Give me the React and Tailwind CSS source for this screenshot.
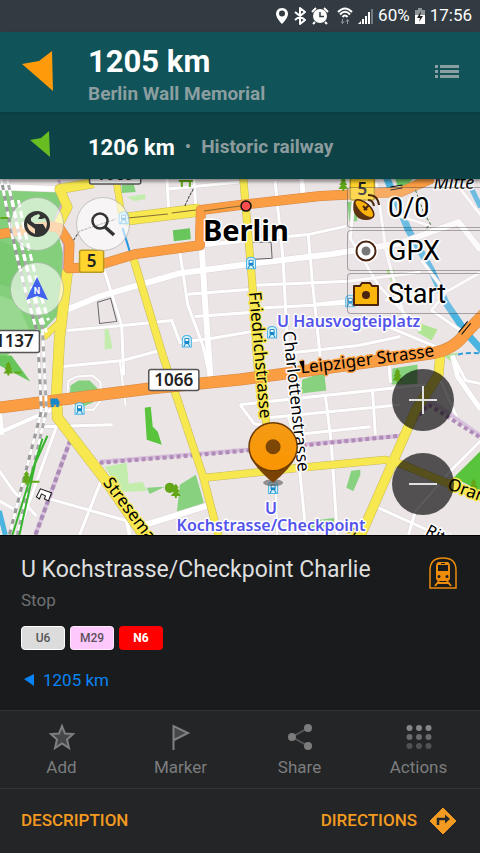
import React from "react";

const MINOR_ROADS = [
  ["M0 187 L60 189", 6],
  ["M68 309 L100 296 L180 273 L240 265 L330 254 L400 243 L430 232 L458 222 L480 250", 6],
  ["M167 175 L169 212", 3], ["M169 189 L240 182", 3], ["M194 175 L196 210", 3],
  ["M202 250 L205 300 L211 382", 6], ["M203 245 L240 241", 4],
  ["M180 252 L188 305 L203 345 L211 382", 3],
  ["M104 268 L122 325 L124 375", 3],
  ["M68 330 L123 325 L172 320 L180 342 L211 338 L252 331", 3],
  ["M188 294 L251 289", 3], ["M195 316 L252 312", 3],
  ["M63 366 L123 360 L160 350", 3],
  ["M120 360 L126 405", 2],
  ["M275 181 L283 260 L288 358", 3], ["M301 175 L303 194", 5],
  ["M308 234 L312 280 L320 356", 3],
  ["M253 240 L310 234 L346 226", 3], ["M255 285 L348 281 L420 272", 3],
  ["M314 304 L350 300", 3], ["M256 308 L350 303", 3],
  ["M285 353 L358 345 L400 336", 3],
  ["M355 180 L350 238 L378 285 L420 330", 3],
  ["M376 183 L386 253 L405 320", 3],
  ["M421 260 L445 292 L480 272", 3], ["M445 292 L431 310 L460 330", 3],
  ["M385 300 L430 290 M455 183 L480 215 M397 215 L430 226", 3],
  ["M370 319 L444 350", 3],
  ["M0 432 L50 410 L64 404", 4], ["M3 434 L0 405", 4],
  ["M41 426 L113 424", 3], ["M70 440 L37 534", 3], ["M58 423 L18 534", 3],
  ["M103 476 L80 534", 3], ["M50 498 L128 520", 3], ["M0 470 L14 490 L37 515", 3],
  ["M0 500 L14 508", 3], ["M145 524 L207 505", 6],
  ["M127 520 L130 534", 4], ["M98 461 L205 454 L266 445", 3],
  ["M240 404 L435 383", 3], ["M268 417 L400 404", 3],
  ["M266 437 L370 426", 3], ["M240 404 L254 423 L266 425", 3],
  ["M325 394 L331 442 L337 534", 3], ["M372 388 L375 434", 3],
  ["M288 415 L297 445 L306 534", 3], ["M276 492 L277 534", 2],
  ["M388 355 L390 382", 3],
  ["M452 355 L465 380 L480 383", 3],
  ["M440 380 L460 425", 3], ["M480 440 L450 470 L415 510 L408 534", 3],
  ["M376 506 L438 534", 3], ["M452 355 L457 376 L480 409", 5],
  ["M68 391 L69 380 L77 376 L93 375 L101 382 L101 400 L94 409 L76 409 Z", 2],
];

const YELLOW_ROADS = [
  ["M94 183 L60 189 L68 207 L58 226", 9],
  ["M116 177 L122 214", 6],
  ["M44 337 L60 322", 6],
  ["M126 219 L200 210", 12],
  ["M68 270 L60 338 L57 395 L58 417 L108 482 L148 540", 10],
  ["M133 256 L163 355 L178 400 L203 475 L220 540", 7],
  ["M243 175 L252 280 L258 370 L269 440", 7],
  ["M205 477 L300 467 L385 459 L400 463 L480 496", 7],
  ["M440 350 L438 374 L415 410 L393 460 L358 540", 9],
];

const ORANGE_ROADS = [
  ["M0 234 L50 226 L60 228 L70 243 L69 268 L92 267 L135 254 L200 245 L201 210 L240 205 L320 196 L400 192 L444 173", 9],
  ["M0 407 L150 388 L240 379 L330 367 L430 353 Q452 350 464 334 L484 313", 11],
];

function Roads({ items, fill, edge }) {
  return (
    <>
      {items.map(([d, w]) => <path key={"e" + d} d={d} fill="none" stroke={edge} strokeWidth={w + 1} strokeLinejoin="round" />)}
      {items.map(([d, w]) => <path key={d} d={d} fill="none" stroke={fill} strokeWidth={w} strokeLinejoin="round" />)}
    </>
  );
}

function Halo({ children, halo = "#fff", color = "#000", w = 3, ...rest }) {
  return (
    <text fill={color} stroke={halo} strokeWidth={w} strokeLinejoin="round" paintOrder="stroke" {...rest}>
      {children}
    </text>
  );
}

function StopMark({ x, y }) {
  return (
    <g transform={`translate(${x} ${y})`}>
      <path d="M-4.500 5.500 V-2 Q-4.500 -6 0 -6 Q4.500 -6 4.500 -2 V5.500 Z" fill="#d9f1fb" stroke="#49b4e6" />
      <rect x="-2.500" y="-3.500" width="5" height="6" rx="1" fill="#1588c9" />
      <rect x="-1.500" y="-2.500" width="3" height="2" fill="#fff" />
      <path d="M-1.500 2.500 L-3 5 M1.500 2.500 L3 5" stroke="#1588c9" />
    </g>
  );
}

function Tree({ x, y }) {
  return <path transform={`translate(${x} ${y})`} d="M0 -7 L3 -3 H1.500 L4 1 H2 L5 5 H1 V7 H-1 V5 H-5 L-2 1 H-4 L-1.500 -3 H-3 Z" fill="#63a719" />;
}

function Shield({ x, y, w, h, label, bg = "#fff", border = "#555", tx }) {
  return (
    <g>
      <rect x={x} y={y} width={w} height={h} rx="2" fill={bg} stroke={border} strokeWidth="1.500" />
      <text x={tx ?? x + w / 2} y={y + h / 2 + 6} textAnchor="middle" fontSize="17" fontWeight="600" fill="#222">{label}</text>
    </g>
  );
}

function CityMap() {
  return (
    <svg className="absolute inset-0 h-full w-full font-['Noto_Sans',sans-serif]" viewBox="0 179 480 355" preserveAspectRatio="xMidYMid slice" role="img" aria-label="Map of Berlin">
      <defs>
        <linearGradient id="pin" x1="0" y1="0" x2="0" y2="1">
          <stop offset="0" stopColor="#f49b16" />
          <stop offset="1" stopColor="#fb9500" />
        </linearGradient>
        <linearGradient id="shade" x1="0" y1="0" x2="0" y2="1">
          <stop offset="0" stopColor="#000" stopOpacity=".35" />
          <stop offset="1" stopColor="#000" stopOpacity="0" />
        </linearGradient>
      </defs>
      <rect y="170" width="480" height="370" fill="#ece5e6" />

      {/* parks */}
      <path d="M0 190 H61 L64 215 L56 222 L64 255 L61 312 L42 332 L0 360 Z" fill="#84cf7c" />
      <path d="M0 295 L18 302 L30 330 L0 352 Z" fill="#99d890" />
      <path d="M0 240 L28 252 L20 290 L0 284 Z" fill="#79c970" />
      <path d="M0 355 H12 L31 381 L0 365 Z M173 230 L190 228 L191 239 L174 241 Z" fill="#69c65d" />
      <path d="M122 185 L134 184 L136 192 L122 193 Z M71 385 L79 380 L90 380 L98 388 L93 402 L80 407 L70 399 Z" fill="#85d07d" />
      <path d="M127 197 L145 194 L146 199 L135 201 Z M105 328 L109 329 L113 348 L105 349 Z M105 466 L127 462 L129 483 L143 481 L147 490 L121 491 Z" fill="#c3edac" />
      <path d="M145 407 L151 406 L153 426 L158 431 L162 444 L147 439 Z M480 450 V490 L453 477 Z" fill="#57c43b" />
      <path d="M147 487 L165 486 L150 493 Z M180 484 L196 474 L204 502 L177 512 Z M302 379 L324 372 L326 390 L301 393 Z M392 368 L417 364 L417 384 L391 384 Z M351 470 L360 469 L360 474 L353 490 L346 487 Z M309 520 L334 517 L334 525 L310 529 Z" fill="#87d17f" />
      <path d="M386 270 L393 268 L396 281 L390 281 Z M420 323 L437 329 L431 340 L417 332 Z M443 355 L457 352 L453 363 Z" fill="#b1e593" />
      <path d="M347 202 L356 201 L357 221 L349 222 Z M395 179 H412 L406 187 L397 186 Z" fill="#6fca65" />

      {/* water */}
      <path d="M385 175 L408 230 L431 270 L445 302 L466 333 L484 353" fill="none" stroke="#4bb3df" strokeWidth="7" />
      <path d="M466 179 L480 207 M0 510 L6 534" fill="none" stroke="#4bb3df" strokeWidth="5" />
      <path d="M123 228 L130 251" stroke="#2497e0" strokeWidth="2" />
      <path d="M450 357 Q460 351 480 353" fill="none" stroke="#2f9ed8" strokeWidth="2" strokeDasharray="5 3" />

      <Roads items={MINOR_ROADS} fill="#fff" edge="#dcd4d7" />

      {/* boundaries */}
      <g fill="none" strokeWidth="4">
        <path d="M100 461 L200 453 L310 443 L400 435 L430 400 L480 435" stroke="#d8c1dc" />
        <path d="M100 462 L200 454 L310 444 L400 435 L428 404 L480 437" stroke="#b18bb8" strokeDasharray="4 3" />
        <path d="M71 439 L36 534" stroke="#d8c1dc" />
        <path d="M71 439 L36 534" stroke="#a98bb5" strokeDasharray="5 3" />
        <path d="M59 180 L66 196 L56 220 L65 245 L62 310" stroke="#cbb0ce" strokeWidth="3" />
      </g>

      <Roads items={YELLOW_ROADS} fill="#f7e850" edge="#c8b957" />
      <Roads items={ORANGE_ROADS} fill="#fb9d42" edge="#d38744" />
      <path d="M128 218 L168 214 M172 213 L196 210 M204 211 L240 206" stroke="#866c32" />

      {/* railway */}
      <g fill="none">
        <path d="M2 179 Q16 260 38 332 L42 410 L10 534" stroke="#999" strokeWidth="3" />
        <path d="M8 179 Q24 260 43 328 L47 410 L18 534" stroke="#aaa" strokeWidth="3" />
        <path d="M2 179 Q16 260 38 332 L42 410 L10 534 M8 179 Q24 260 43 328 L47 410 L18 534" stroke="#fff" strokeWidth="3" strokeDasharray="6 5" />
        <path d="M13 200 Q26 270 47 332 M19 200 Q33 270 49 320" stroke="#fff" strokeWidth="3" strokeDasharray="7 4" />
        <path d="M48 435 L36 462 L20 534 M43 438 L13 534" stroke="#37b52e" strokeWidth="2" />
      </g>
      <path d="M74 240 L80 231 L89 228 L101 224 L116 219 M185 206 L189 197 L194 188" fill="none" stroke="#444" strokeDasharray="3 1" />
      <path d="M98 302 L111 298 L117 321 L100 323 Z M253 242 L271 242 L272 258 L254 259" fill="none" stroke="#666" />
      <path d="M37 496 L41 488 L52 492 L49 500 L45 498 L46 495 L42 493 L40 498 Z" fill="#fff" stroke="#111" />
      <path d="M458 332 L467 321 M461 334 L470 323 M390 187 L402 185 M390 190 L402 188" stroke="#111" />
      <path d="M415 190 L423 212 L430 224 L426 228" fill="none" stroke="#27612a" strokeDasharray="3 2" />

      <Tree x={9} y={368} /><Tree x={27} y={477} /><Tree x={176} y={490} /><Tree x={397} y={375} /><Tree x={473} y={485} /><Tree x={343} y={184} />
      <circle cx="170" cy="487" r="5" fill="#63a719" />
      <path d="M179 181 H193 M182 181 V187 M190 181 V187 M1 218 H9 M15 372 H22 M32 481 H40" stroke="#63a719" strokeWidth="2" />

      <StopMark x={124} y={218} /><StopMark x={187} y={341} /><StopMark x={251} y={263} />
      <StopMark x={350} y={301} /><StopMark x={272} y={332} /><StopMark x={80} y={408} /><StopMark x={273} y={487} />
      <path d="M51 398 H58 L60 401 V404 H51 Z" fill="#1588c9" />
      <circle cx="53" cy="405" r="1.500" fill="#1588c9" /><circle cx="58" cy="405" r="1.500" fill="#1588c9" />

      <Shield x={90} y={164} w={51} h={20} label="1069" />
      <Shield x={80} y={250} w={24} h={22} label="5" bg="#ffd42c" border="#b99b24" />
      <Shield x={350} y={178} w={24} h={22} label="5" bg="#ffd42c" border="#b99b24" />
      <Shield x={-12} y={330} w={52} h={22} label="1137" tx={15} />
      <Shield x={149} y={369} w={50} h={21} label="1066" />

      <circle cx="246" cy="206" r="5" fill="#ff4c4c" stroke="#111" strokeWidth="1.500" />
      <Halo x="203" y="241" fontSize="29" fontWeight="700">Berlin</Halo>
      <Halo x="433" y="189" fontSize="18" fontStyle="italic">Mitte</Halo>
      <Halo x="277" y="327" fontSize="16" fontWeight="600" color="#5353ec">U Hausvogteiplatz</Halo>
      <Halo transform="translate(249 292) rotate(85)" fontSize="17" halo="#f7e850">Friedrichstrasse</Halo>
      <Halo transform="translate(283 331) rotate(84)" fontSize="17">Charlottenstrasse</Halo>
      <path id="leipziger" d="M301 373 Q370 365 446 354" fill="none" />
      <Halo fontSize="17" halo="#fb9d42"><textPath href="#leipziger">Leipziger Strasse</textPath></Halo>
      <path d="M299 361 L304 360 L304 371 Z" />
      <Halo transform="translate(103 482) rotate(53)" fontSize="17" halo="#f7e850">Stresemannstrasse</Halo>
      <Halo transform="translate(446 488) rotate(20)" fontSize="17" halo="#f7e850">Oranienstrasse</Halo>
      <Halo transform="translate(424 533) rotate(27)" fontSize="16">Ritterstrasse</Halo>
      <Halo transform="translate(354 535) rotate(-65)" fontSize="17" halo="#f7e850">s</Halo>
      <Halo textAnchor="middle" fontSize="16" fontWeight="600" color="#5353ec">
        <tspan x="271" y="513">U</tspan>
        <tspan x="271" y="530">Kochstrasse/Checkpoint</tspan>
      </Halo>

      {/* selected place */}
      <ellipse cx="273" cy="482" rx="10" ry="3.500" fill="#555" opacity=".6" />
      <path d="M250 456 Q256 468 273 482 Q290 468 296 456 Z" fill="#7a4304" />
      <circle cx="273" cy="446" r="24" fill="url(#pin)" stroke="#6c3c05" strokeWidth="1.500" />
      <circle cx="273" cy="446" r="7.500" fill="#7c4605" />
      <rect y="179" width="480" height="5" fill="url(#shade)" />
    </svg>
  );
}

const ROUND = "flex size-[54px] items-center justify-center rounded-full border border-black/20 bg-white/60 text-[#333]";
const ZOOM = "flex size-[62px] items-center justify-center rounded-full bg-black/65";
const WIDGET = "flex h-[41px] w-full items-center gap-2 rounded-l border border-r-0 border-black/30 bg-[#eee8e9]/20 pl-1";
const WIDGET_TEXT = "text-[27px] leading-8 text-black [text-shadow:0_0_2px_#fff,1px_1px_1px_#fff,-1px_-1px_1px_#fff,2px_0_1px_#fff,-2px_0_1px_#fff,0_2px_1px_#fff]";

function MapControls() {
  return (
    <div className="absolute inset-0 flex justify-between overflow-hidden">
      <div className="flex flex-col gap-[11px] pl-[10px] pt-[18px]">
        <div className="flex gap-3">
          <button className={ROUND} aria-label="Configure map">
            <svg width="28" height="28" viewBox="0 0 28 28" fill="#333">
              <path fillRule="evenodd" d="M14 1 A13 13 0 1 0 14 27 A13 13 0 1 0 14 1 Z M4 13 L8 16 L12 19 V24 Q4 21 4 13 Z M8 8 Q11 5 16 4 L17 6 L15 9 H19 L22 8 Q24 11 24 14 L23 19 L20 14 H12 L8 11 Z" />
            </svg>
          </button>
          <button className={ROUND} aria-label="Search">
            <svg width="28" height="28" viewBox="0 0 28 28" fill="none" stroke="#333">
              <circle cx="11" cy="11" r="7.500" strokeWidth="2.500" /><path d="M16 17 L25 25" strokeWidth="3.500" />
            </svg>
          </button>
        </div>
        <button className={ROUND} aria-label="Compass">
          <svg width="22" height="24" viewBox="0 0 22 24">
            <path d="M11 0 L22 23 L11 19 L0 23 Z" fill="#4162ed" />
            <text x="11" y="17" textAnchor="middle" fontSize="9" fontWeight="700" fill="#fff">N</text>
          </svg>
        </button>
      </div>
      <div className="flex flex-col justify-between pt-2 pb-5">
        <div className="flex w-[133px] flex-col gap-[2px]">
          <button className={WIDGET}>
            <svg width="28" height="32" viewBox="0 0 28 32" fill="none">
              <ellipse cx="12" cy="17" rx="6" ry="12" transform="rotate(-48 12 17)" fill="#f8b20b" stroke="#4b270e" strokeWidth="1.500" />
              <path d="M3 9 C-2 18 4 29 15 28 C18 28 20 27 21 25 C14 26 5 18 3 9 Z" fill="#5d3311" />
              <path d="M12 18 L17 13 M11 14 L15 18" stroke="#4b270e" strokeWidth="2" />
              <path d="M16 8 Q21 8 22 14 M16 3 Q26 3 27 13" stroke="#4b270e" strokeWidth="2" />
            </svg>
            <span className={WIDGET_TEXT}>0/0</span>
          </button>
          <button className={WIDGET}>
            <svg width="28" height="28" viewBox="0 0 28 28">
              <circle cx="14" cy="14" r="12" fill="#fff" />
              <circle cx="14" cy="14" r="9.500" fill="#fff" stroke="#4b2410" strokeWidth="2" />
              <circle cx="14" cy="14" r="4.500" fill="#777" />
            </svg>
            <span className={WIDGET_TEXT}>GPX</span>
          </button>
          <button className={WIDGET}>
            <svg width="28" height="28" viewBox="0 0 28 28">
              <path d="M2 6 H8 L10 3 H18 L20 6 H26 V25 H2 Z" fill="#f9b50b" stroke="#4b2410" strokeWidth="2" strokeLinejoin="round" />
              <circle cx="14" cy="15" r="4" fill="#4b2410" />
            </svg>
            <span className={WIDGET_TEXT}>Start</span>
          </button>
        </div>
        <div className="flex flex-col items-end gap-[22px] pr-[26px]">
          <button className={ZOOM} aria-label="Zoom in">
            <svg width="28" height="28" stroke="#e0e0e0" strokeWidth="2"><path d="M0 14 H28 M14 0 V28" /></svg>
          </button>
          <button className={ZOOM} aria-label="Zoom out">
            <svg width="28" height="28" stroke="#e0e0e0" strokeWidth="2"><path d="M0 14 H28" /></svg>
          </button>
        </div>
      </div>
    </div>
  );
}

function StatusBar() {
  return (
    <div className="flex h-8 items-center justify-end bg-[#323b41] pr-2 text-[17px] text-white">
      <svg width="14" height="18" viewBox="0 0 14 18" className="mr-1"><path fillRule="evenodd" d="M7 1 C3 1 1 4 1 7 C1 11 7 17 7 17 C7 17 13 11 13 7 C13 4 11 1 7 1 Z M7 3.500 A3 3 0 1 1 7 9.500 A3 3 0 1 1 7 3.500 Z" fill="#fff" /></svg>
      <svg width="14" height="18" viewBox="0 0 14 18" className="mr-1"><path d="M2 5 L12 13 L7 17 V1 L12 5 L2 13" fill="none" stroke="#fff" strokeWidth="2" strokeLinejoin="round" /></svg>
      <svg width="18" height="18" viewBox="0 0 18 18" className="mr-2">
        <circle cx="9" cy="9" r="7" fill="#fff" />
        <path d="M1 5 L5 1 M17 5 L13 1 M4 15 L2 17 M14 15 L16 17" stroke="#fff" strokeWidth="2" />
        <path d="M9 5 V9.500 H13" fill="none" stroke="#323b41" strokeWidth="1.500" />
      </svg>
      <svg width="16" height="18" viewBox="0 0 16 18" fill="none" className="mr-1">
        <path d="M1 5 Q8 -2 15 5 M3 7.500 Q8 2 13 7.500 M5.500 10 Q8 7 10.500 10" stroke="#fff" strokeWidth="2" />
        <path d="M5.500 12 V16 M4 14.500 L5.500 16.500 L7 14.500 M10.500 17 V13 M9 14.500 L10.500 12.500 L12 14.500" stroke="#929a9e" />
      </svg>
      <svg width="17" height="18" viewBox="0 0 17 18" className="mr-1" strokeWidth="2">
        <path d="M1 17 L4 14 V17 Z" fill="#fff" />
        <path d="M6 17 V12 M9 17 V9 M12 17 V5" stroke="#fff" /><path d="M15 17 V2" stroke="#737b80" />
      </svg>
      <span>60%</span>
      <svg width="12" height="18" viewBox="0 0 12 18" className="ml-1 mr-1">
        <path d="M4 1 H8 V3 H11 V8 H1 V3 H4 Z" fill="#8c9396" /><path d="M1 8 H11 V17 H1 Z" fill="#fff" />
        <path d="M7 4 L3 11 H6 L5 15 L9 9 H6 Z" fill="#222" />
      </svg>
      <span>17:56</span>
    </div>
  );
}

const ACTION = "flex flex-1 flex-col items-center gap-1 pt-3 text-[17px] leading-6 text-[#7c7d7e]";

export default function App() {
  return (
    <div className="flex min-h-screen w-full flex-col bg-[#191b1d] font-[Roboto,sans-serif]">
      <StatusBar />
      <header className="relative z-10 bg-[#0d4347] shadow-md">
        <div className="flex h-20 items-center bg-[#105359] pr-5 shadow">
          <div className="w-[88px] pl-[22px]">
            <svg width="32" height="42" viewBox="0 0 32 42"><path d="M0 13 L17 10 L30 0 L31 40 Z" fill="#ff9b0b" /></svg>
          </div>
          <div className="flex-1 pt-2">
            <div className="text-[31px] leading-9 font-bold text-white">1205 km</div>
            <div className="text-[19px] leading-7 font-bold text-[#8c9ea0]">Berlin Wall Memorial</div>
          </div>
          <button aria-label="Waypoint list">
            <svg width="26" height="16" viewBox="0 0 26 16" fill="#899ea0"><path d="M1 1 H4 V4 H1 Z M1 6 H4 V9 H1 Z M1 11 H4 V14 H1 Z M6 1 H25 V4 H6 Z M6 6 H25 V9 H6 Z M6 11 H25 V14 H6 Z" /></svg>
          </button>
        </div>
        <div className="flex h-[67px] items-center pt-1">
          <div className="w-[88px] pb-2 pl-[29px]">
            <svg width="22" height="28" viewBox="0 0 22 28"><path d="M1 10 L12 8 L20 1 L21 27 Z" fill="#68bd22" /></svg>
          </div>
          <span className="text-[22px] font-bold text-white">1206 km</span>
          <span className="mx-[10px] text-[19px] text-[#8c9c9e]">•</span>
          <span className="text-[19px] font-bold text-[#8c9c9e]">Historic railway</span>
        </div>
      </header>

      <main className="relative min-h-[340px] flex-1 overflow-hidden">
        <CityMap />
        <MapControls />
      </main>

      <section className="flex justify-between border-t border-black px-[21px] pt-[18px] pb-[18px]">
        <div>
          <h1 className="text-[23px] leading-8 text-[#dedfdf]">U Kochstrasse/Checkpoint Charlie</h1>
          <p className="mt-[2px] text-[17px] leading-6 text-[#707273]">Stop</p>
          <div className="mt-[14px] flex gap-[5px] text-[12px] font-medium">
            <span className="flex h-6 w-11 items-center justify-center rounded border border-white bg-[#dcdcdc] text-[#555]">U6</span>
            <span className="flex h-6 w-11 items-center justify-center rounded border border-white/60 bg-[#fdc8fb] text-[#5d505d]">M29</span>
            <span className="flex h-6 w-11 items-center justify-center rounded bg-[#ff0000] font-bold text-white">N6</span>
          </div>
          <div className="mt-[18px] flex items-center gap-2 pl-[3px] text-[17px] leading-6 text-[#0b84f3]">
            <svg width="11" height="12" viewBox="0 0 11 12"><path d="M0 5 L10 0 V12 Z" fill="#0b84f3" /></svg>
            1205 km
          </div>
        </div>
        <svg className="mt-[3px]" width="30" height="32" viewBox="0 0 30 32" fill="none">
          <path d="M1 31 V13 C1 5 6 1 14 1 C22 1 27 5 27 13 V31 Z" stroke="#ed8b0b" strokeWidth="1.500" />
          <path fillRule="evenodd" d="M9 5 H19 Q21 6 21 9 V21 Q21 24 18 24 H10 Q7 24 7 21 V9 Q7 6 9 5 Z M9 8 V14 H19 V8 Z M10 18 A1.500 1.500 0 1 0 10 21 A1.500 1.500 0 1 0 10 18 Z M18 18 A1.500 1.500 0 1 0 18 21 A1.500 1.500 0 1 0 18 18 Z" fill="#ed8b0b" />
          <path d="M12 6.500 H16" stroke="#191b1d" />
          <path d="M10 24 L6 29 M18 24 L22 29 M9 26 H19" stroke="#ed8b0b" strokeWidth="2" />
        </svg>
      </section>

      <nav className="flex h-[78px] border-t border-[#303638] bg-[#232527] px-[2px]">
        <button className={ACTION}>
          <svg width="28" height="28" viewBox="0 0 28 28"><path d="M14 3 L17 10.500 L25 11 L19 16.500 L21 25 L14 20.500 L7 25 L9 16.500 L3 11 L11 10.500 Z" fill="#45474a" stroke="#808080" strokeWidth="2" /></svg>
          Add
        </button>
        <button className={ACTION}>
          <svg width="28" height="28" viewBox="0 0 28 28"><path d="M6.500 27 V3 L21 10 L7 17" fill="#45474a" stroke="#808080" strokeWidth="2" /></svg>
          Marker
        </button>
        <button className={ACTION}>
          <svg width="28" height="28" viewBox="0 0 28 28"><path d="M22 5 L6 14 L22 23" fill="none" stroke="#555657" strokeWidth="2" /><circle cx="22" cy="5" r="4" fill="#7c7c7c" /><circle cx="6" cy="14" r="4" fill="#7c7c7c" /><circle cx="22" cy="23" r="4" fill="#7c7c7c" /></svg>
          Share
        </button>
        <button className={ACTION}>
          <svg width="28" height="28" viewBox="0 0 28 28">
            {["#858585", "#6b6b6b", "#525252"].map((color, row) => [4.5, 14, 23.5].map((x) => <circle key={row + "-" + x} cx={x} cy={5 + row * 9} r="3" fill={color} />))}
          </svg>
          Actions
        </button>
      </nav>
      <footer className="flex h-[65px] items-center justify-between border-t border-[#303638] bg-[#232527] pr-[23px] pl-[21px] text-[17px] font-medium text-[#f39b20]">
        <button>DESCRIPTION</button>
        <button className="flex items-center gap-3">
          DIRECTIONS
          <svg width="28" height="28" viewBox="0 0 28 28"><path d="M14 1 L27 14 L14 27 L1 14 Z" fill="#f39b20" stroke="#f39b20" strokeLinejoin="round" /><path d="M9 18 V12 H17" fill="none" stroke="#25282a" strokeWidth="2.500" /><path d="M16 7.500 L21 12 L16 16.500 Z" fill="#25282a" /></svg>
        </button>
      </footer>
    </div>
  );
}
